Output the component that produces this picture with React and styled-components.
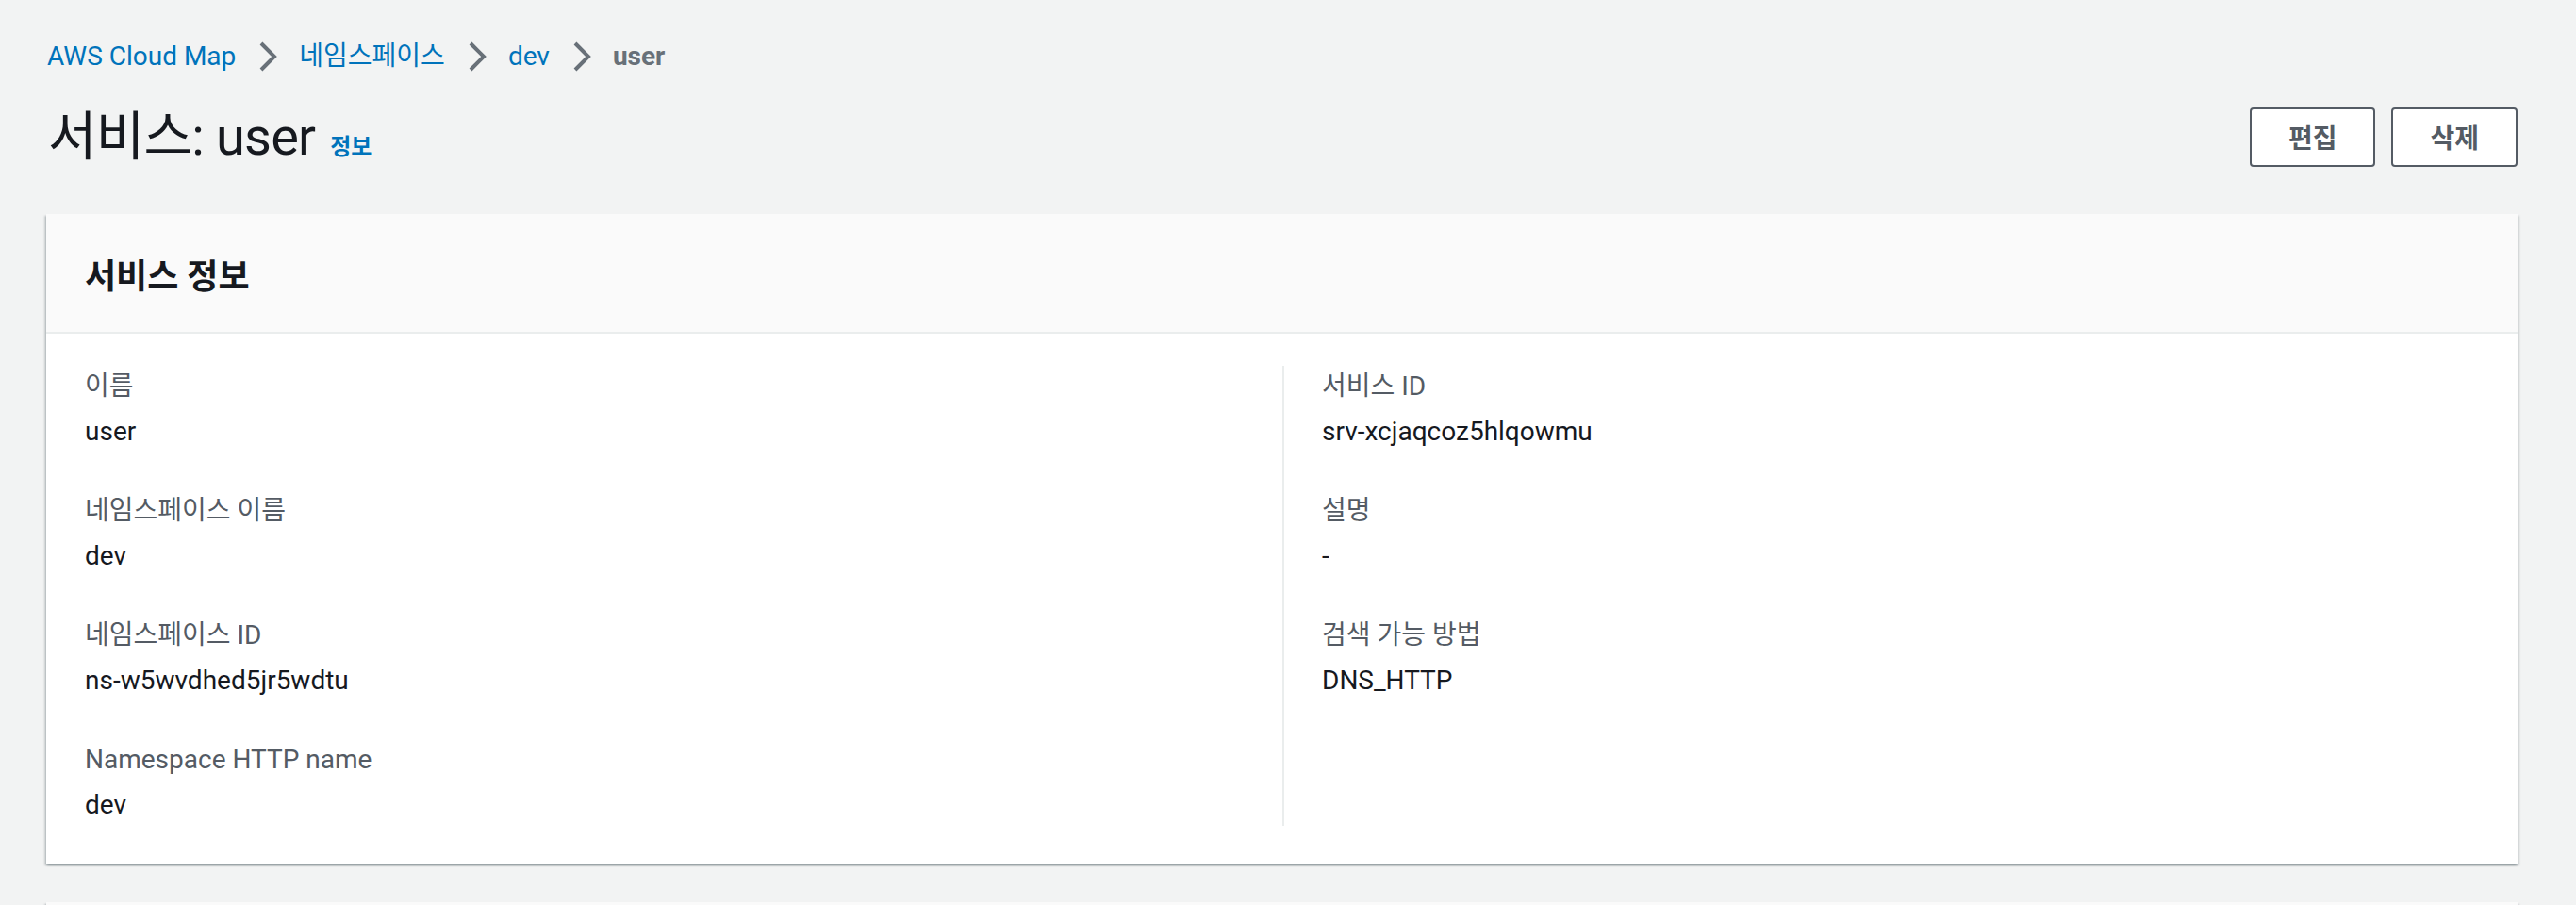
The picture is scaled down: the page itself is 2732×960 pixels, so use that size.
import React from "react";
import styled, { createGlobalStyle } from "styled-components";

const Global = createGlobalStyle`
  html, body { margin: 0; padding: 0; background: #f2f3f3; }
  body {
    font-family: Roboto, "Noto Sans CJK KR", "Noto Sans", sans-serif;
    color: #16191f;
    -webkit-font-smoothing: antialiased;
    overflow: hidden;
  }
  * { box-sizing: border-box; }
`;

const Page = styled.div`
  padding: 40px 62px 0 49px;
  height: 960px;
  overflow: hidden;
`;

const Breadcrumbs = styled.nav`
  display: flex;
  align-items: center;
  height: 40px;
  font-size: 28px;
  line-height: 40px;
  padding-left: 1px;
`;

const Crumb = styled.a`
  color: ${(p) => (p.$current ? "#687078" : "#0073bb")};
  font-weight: ${(p) => (p.$current ? 700 : 400)};
  text-decoration: none;
`;

const Sep = styled.span`
  display: inline-flex;
  margin: 0 23px 0 24px;
  color: #687078;
`;

const HeaderRow = styled.div`
  display: flex;
  align-items: center;
  justify-content: space-between;
  margin-top: 33px;
  height: 64px;
`;

const TitleWrap = styled.div`
  display: flex;
  align-items: baseline;
  gap: 16px;
  padding-left: 2px;
`;

const Title = styled.h1`
  margin: 0;
  font-size: 56px;
  font-weight: 400;
  line-height: 64px;
  color: #16191f;
  letter-spacing: -0.8px;
`;

const InfoLink = styled.a`
  font-size: 24px;
  font-weight: 700;
  color: #0073bb;
  text-decoration: none;
`;

const Actions = styled.div`
  display: flex;
  gap: 17px;
`;

const Button = styled.button`
  height: 63px;
  padding: 0 39px;
  background: #fff;
  border: 2px solid #545b64;
  border-radius: 4px;
  font-family: inherit;
  font-size: 28px;
  font-weight: 700;
  color: #545b64;
  cursor: pointer;
`;

const Panel = styled.section`
  margin-top: ${(p) => p.$gap || 50}px;
  background: #fff;
  box-shadow: 0 2px 2px 0 rgba(0, 28, 36, 0.3),
    2px 2px 2px 0 rgba(0, 28, 36, 0.15),
    -2px 2px 2px 0 rgba(0, 28, 36, 0.15);
`;

const PanelHeader = styled.div`
  display: flex;
  align-items: center;
  height: 127px;
  padding: 0 41px;
  background: #fafafa;
  border-bottom: 2px solid #eaeded;
`;

const PanelTitle = styled.h2`
  margin: 0;
  font-size: 36px;
  font-weight: 700;
  color: #16191f;
`;

const PanelBody = styled.div`
  display: grid;
  grid-template-columns: 1fr 1fr;
  padding: 34px 40px 40px 41px;
`;

const Column = styled.div`
  display: flex;
  flex-direction: column;
  gap: 40px;
  ${(p) =>
    p.$divided &&
    `
    border-left: 2px solid #eaeded;
    padding-left: 40px;
  `}
`;

const Field = styled.div`
  display: flex;
  flex-direction: column;
  gap: 4px;
`;

const Label = styled.div`
  font-size: 28px;
  line-height: 44px;
  color: #545b64;
`;

const Value = styled.div`
  font-size: 28px;
  line-height: 44px;
  color: #16191f;
`;

const Chevron = () => (
  <svg width="20" height="32" viewBox="0 0 20 32" fill="none">
    <polyline
      points="3,2 17,16 3,30"
      stroke="currentColor"
      strokeWidth="4"
      strokeLinecap="butt"
      strokeLinejoin="miter"
    />
  </svg>
);

const left = [
  ["이름", "user"],
  ["네임스페이스 이름", "dev"],
  ["네임스페이스 ID", "ns-w5wvdhed5jr5wdtu"],
  ["Namespace HTTP name", "dev"],
];
const right = [
  ["서비스 ID", "srv-xcjaqcoz5hlqowmu"],
  ["설명", "-"],
  ["검색 가능 방법", "DNS_HTTP"],
];

export default function App() {
  return (
    <>
      <Global />
      <Page>
        <Breadcrumbs>
          <Crumb href="#">AWS Cloud Map</Crumb>
          <Sep><Chevron /></Sep>
          <Crumb href="#">네임스페이스</Crumb>
          <Sep><Chevron /></Sep>
          <Crumb href="#">dev</Crumb>
          <Sep><Chevron /></Sep>
          <Crumb $current>user</Crumb>
        </Breadcrumbs>
        <HeaderRow>
          <TitleWrap>
            <Title>서비스: user</Title>
            <InfoLink href="#">정보</InfoLink>
          </TitleWrap>
          <Actions>
            <Button>편집</Button>
            <Button>삭제</Button>
          </Actions>
        </HeaderRow>
        <Panel>
          <PanelHeader>
            <PanelTitle>서비스 정보</PanelTitle>
          </PanelHeader>
          <PanelBody>
            <Column>
              {left.map(([l, v]) => (
                <Field key={l}>
                  <Label>{l}</Label>
                  <Value>{v}</Value>
                </Field>
              ))}
            </Column>
            <Column $divided>
              {right.map(([l, v]) => (
                <Field key={l}>
                  <Label>{l}</Label>
                  <Value>{v}</Value>
                </Field>
              ))}
            </Column>
          </PanelBody>
        </Panel>
        <Panel $gap={41}>
          <PanelHeader />
        </Panel>
      </Page>
    </>
  );
}
